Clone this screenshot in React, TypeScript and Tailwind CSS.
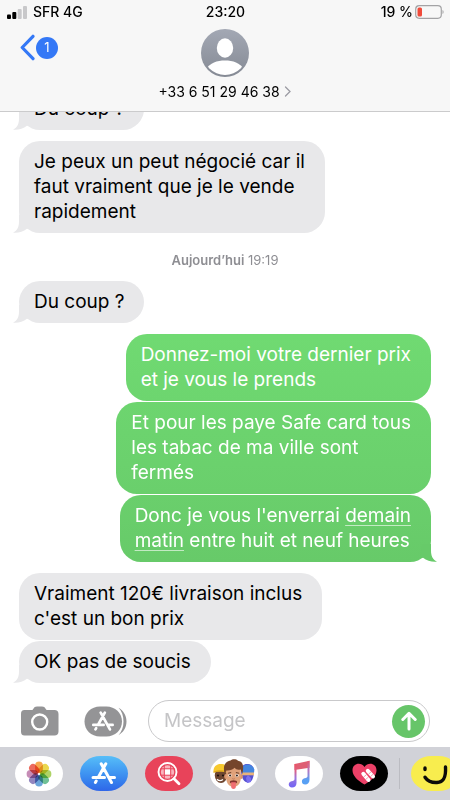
import type { ReactNode } from "react";

type Message = {
  text: ReactNode;
  mine?: boolean;
  tail?: boolean;
  shade?: string;
};

const earlier: Message[][] = [
  [{ text: "Du coup ?", tail: true }],
  [
    {
      text: "Je peux un peut négocié car il\nfaut vraiment que je le vende\nrapidement",
      tail: true,
    },
  ],
];

const today: Message[][] = [
  [{ text: "Du coup ?", tail: true }],
  [
    {
      text: "Donnez-moi votre dernier prix\net je vous le prends",
      mine: true,
      shade: "bg-linear-to-b from-[#70da72] to-[#6dd56f]",
    },
    {
      text: "Et pour les paye Safe card tous\nles tabac de ma ville sont\nfermés",
      mine: true,
      shade: "bg-linear-to-b from-[#6dd56f] to-[#6acf6c]",
    },
    {
      text: (
        <>
          Donc je vous l'enverrai <Underlined>demain</Underlined>
          {"\n"}
          <Underlined>matin</Underlined> entre huit et neuf heures
        </>
      ),
      mine: true,
      tail: true,
      shade: "bg-linear-to-b from-[#6acf6c] to-[#67ca69]",
    },
  ],
  [
    { text: "Vraiment 120€ livraison inclus\nc'est un bon prix" },
    { text: "OK pas de soucis", tail: true },
  ],
];

function Underlined({ children }: { children: ReactNode }) {
  return (
    <span className="underline decoration-white/60 decoration-1 underline-offset-3">
      {children}
    </span>
  );
}

function Bubble({ text, mine, tail, shade }: Message) {
  return (
    <div
      className={`relative rounded-[21px] pt-2 pb-[9px] pr-5 pl-[15px] text-[19px] leading-[25px] whitespace-pre-line ${
        mine ? `self-end text-white ${shade}` : "self-start bg-[#e8e8ea] text-black"
      }`}
    >
      {text}
      {tail && (
        <svg
          viewBox="0 0 20 18"
          className={`absolute bottom-0 h-[18px] w-5 ${
            mine ? "-right-1.5 -scale-x-100 text-[#67ca69]" : "-left-1.5 text-[#e8e8ea]"
          }`}
          fill="currentColor"
          aria-hidden="true"
        >
          <path d="M0 17.700C4.500 15.500 6 12 6 6V0h9l2 14-3-.3C10 17 5 18.200 0 17.700z" />
        </svg>
      )}
    </div>
  );
}

function Groups({ groups }: { groups: Message[][] }) {
  return (
    <>
      {groups.map((group, i) => (
        <div key={i} className="flex shrink-0 flex-col gap-px">
          {group.map((message, j) => (
            <Bubble key={j} {...message} />
          ))}
        </div>
      ))}
    </>
  );
}

function StatusBar() {
  return (
    <div className="grid grid-cols-3 items-center pr-1.5 pl-[7px] text-[14px] leading-6 font-medium">
      <div className="flex items-center gap-1.5">
        <svg width="20" height="13" viewBox="0 0 20 13" aria-hidden="true">
          <rect x="0" y="8.500" width="4" height="4.500" rx="1" />
          <rect x="5.300" y="6" width="4" height="7" rx="1" />
          <rect x="10.700" y="3" width="4" height="10" rx="1" fill="#c8c8ca" />
          <rect x="16" y="0" width="4" height="13" rx="1" fill="#c8c8ca" />
        </svg>
        <span>SFR 4G</span>
      </div>
      <span className="text-center">23:20</span>
      <div className="flex items-center justify-end gap-0.5">
        <span>19 %</span>
        <svg width="29" height="14" viewBox="0 0 29 14" aria-hidden="true">
          <rect x=".7" y=".7" width="25.600" height="12.600" rx="3.500" fill="none" stroke="#a3a3a5" strokeWidth="1.200" />
          <rect x="2.500" y="2.500" width="4.500" height="9" rx="1.500" fill="#f04a3a" />
          <path d="M27.500 5v4c1.500-.5 1.500-3.500 0-4z" fill="#a3a3a5" />
        </svg>
      </div>
    </div>
  );
}

function Header() {
  return (
    <header className="z-10 shrink-0 border-b border-[#cbcbcc] bg-[#f7f7f7]">
      <StatusBar />
      <div className="grid grid-cols-[1fr_auto_1fr] items-start pt-1 pb-[10px]">
        <button className="mt-1.5 ml-5 flex items-center gap-px justify-self-start" aria-label="Retour, 1 message non lu">
          <svg width="15" height="27" viewBox="0 0 15 27" fill="none" stroke="#3478f6" strokeWidth="3.200" strokeLinecap="round" strokeLinejoin="round">
            <path d="M13 2.300 2.200 13.500 13 24.700" />
          </svg>
          <span className="flex size-[22px] items-center justify-center rounded-full bg-[#3478f6] text-[13px] text-white">
            1
          </span>
        </button>
        <button className="flex flex-col items-center gap-1">
          <svg width="48" height="50" viewBox="0 0 48 50" aria-hidden="true">
            <defs>
              <linearGradient id="avatar" x1="0" y1="0" x2="0" y2="1">
                <stop offset="0" stopColor="#a3a8b4" />
                <stop offset="1" stopColor="#858a94" />
              </linearGradient>
              <clipPath id="avatarClip">
                <circle cx="24" cy="25" r="22" />
              </clipPath>
            </defs>
            <circle cx="24" cy="25" r="24" fill="url(#avatar)" />
            <ellipse cx="24" cy="20" rx="8.200" ry="9.700" fill="#fff" />
            <path clipPath="url(#avatarClip)" d="M5 41C9 35 16 32.500 24 32.500S39 35 43 41C37 46 31 48 24 48S11 46 5 41z" fill="#fff" />
          </svg>
          <span className="flex items-center gap-1 text-[14px] leading-[19px]">
            +33 6 51 29 46 38
            <svg width="8" height="11" viewBox="0 0 8 11" fill="none" stroke="#9b9ba3" strokeWidth="1.300" strokeLinecap="round">
              <path d="m1.500 1 4.500 4.500L1.500 10" />
            </svg>
          </span>
        </button>
      </div>
    </header>
  );
}

function AppStoreGlyph() {
  return (
    <g fill="none" stroke="#fff" strokeWidth="3" strokeLinecap="round">
      <path d="M14.800 1.800 7.500 15M10.200 1.800 20.500 20.500M2 15.500h11.500M19 15.500h4.500M5.200 19l-.8 1.400" />
    </g>
  );
}

function Composer() {
  return (
    <form className="flex shrink-0 items-center bg-white pt-[17px] pr-5 pb-[5px] pl-5" onSubmit={(e) => e.preventDefault()}>
      <button type="button" aria-label="Appareil photo">
        <svg width="39" height="30" viewBox="0 0 39 30">
          <path
            d="M4.500 4h7.200c.8 0 1.200-.4 1.700-1.200C14.300 1.200 15 .5 17 .5h5c2 0 2.700.7 3.600 2.300.5.8.9 1.200 1.700 1.200h7.200C37 4 38.500 5.500 38.500 8v17.500c0 2.500-1.500 4-4 4h-30c-2.500 0-3.500-1.500-3.500-4V8c0-2.500 1-4 3.500-4z"
            fill="#949496"
          />
          <circle cx="19.700" cy="16" r="7.500" fill="none" stroke="#fff" strokeWidth="2.400" />
        </svg>
      </button>
      <button type="button" className="ml-[25px]" aria-label="Apps">
        <svg width="43" height="31" viewBox="0 0 43 31">
          <path d="M16 .5h6.500C31 .5 38 7 38 15.500s-7 15-15.500 15H16C7 30.500.5 24 .5 15.500S7 .5 16 .5z" fill="#949496" />
          <path d="M34.500 1.800C39 4.500 42.500 9 42.500 15.500S39 26.500 34.500 29.200c3.300-3.500 5-8.200 5-13.700s-1.700-10.200-5-13.700z" fill="#949496" />
          <g transform="translate(7.500 5) scale(.9)">
            <AppStoreGlyph />
          </g>
        </svg>
      </button>
      <div className="ml-[21px] flex h-[42px] min-w-0 flex-1 items-center rounded-full border border-[#c9c9cb] pr-1 pl-[15px]">
        <input
          aria-label="Message"
          placeholder="Message"
          className="min-w-0 flex-1 bg-transparent text-[19px] outline-none placeholder:text-[#c5c5c7]"
        />
        <button className="flex size-[33px] shrink-0 items-center justify-center rounded-full bg-[#67c569]" aria-label="Envoyer">
          <svg width="16" height="20" viewBox="0 0 16 20" fill="none" stroke="#fff" strokeWidth="3" strokeLinecap="round" strokeLinejoin="round">
            <path d="M8 18V2.500M1.800 8.500 8 2.300l6.200 6.200" />
          </svg>
        </button>
      </div>
    </form>
  );
}

const petals = ["#f5a03c", "#e8d33a", "#a5cf55", "#5fb98a", "#5c9bd6", "#8679b8", "#c07fae", "#ea5a4b"];

function PhotosIcon() {
  return (
    <svg width="26" height="26" viewBox="-13 -13 26 26">
      {petals.map((color, i) => (
        <rect
          key={color}
          x="-3.900"
          y="-12.400"
          width="7.800"
          height="11.400"
          rx="3.900"
          fill={color}
          className="mix-blend-multiply"
          opacity=".9"
          transform={`rotate(${i * 45})`}
        />
      ))}
    </svg>
  );
}

function SearchIcon() {
  return (
    <svg width="24" height="24" viewBox="0 0 24 24" fill="none" stroke="#fff">
      <circle cx="10.500" cy="10" r="9" strokeWidth="1.900" />
      <circle cx="10.500" cy="10" r="6.700" fill="#f9b4bd" stroke="none" />
      <rect x="7.500" y="7" width="6" height="6" fill="#fff" stroke="none" />
      <path d="M7.300 3v14M13.700 3v14M3.500 6.800h14M3.500 13.200h14" stroke="#e8435a" strokeWidth="1" />
      <path d="m17 16.700 5 5" strokeWidth="2.800" strokeLinecap="round" />
    </svg>
  );
}

function MemojiIcon() {
  return (
    <svg width="44" height="32" viewBox="0 0 44 32">
      <ellipse cx="9" cy="17.500" rx="6.200" ry="7.500" fill="#6e4630" />
      <path d="M1.500 14.500C1 8 5 5.500 10 6s6.500 4 6 9c-5-2-10-2-14.500-.5z" fill="#f7c92f" />
      <path d="M1.500 14.200c5-1.800 10-1.800 14.500 0" stroke="#dda51c" strokeWidth="1.200" fill="none" />
      <circle cx="6" cy="17.500" r="1.100" fill="#20130d" />
      <circle cx="11" cy="17.500" r="1.100" fill="#20130d" />
      <path d="M5 21.200c2 2 4 1.800 6 .3" stroke="#fff" strokeWidth="1.300" fill="none" />
      <path d="M29 13C29 8 32 5.500 36 6s6.500 3.500 6 8.500-2 10-6 10-6.500-4.500-7-11.500z" fill="#5550cf" />
      <path d="M29.500 11c2.500-6 10.500-6 12.800.5L42 15H30z" fill="#4486df" />
      <path d="M30 14.500h12v2.800H30z" fill="#e7b27b" />
      <path d="m34 20 2-3 3 3v4l-4 1z" fill="#7a6fee" />
      <ellipse cx="13.900" cy="18.500" rx="1.700" ry="2.600" fill="#d9956c" />
      <ellipse cx="29.100" cy="18.500" rx="1.700" ry="2.600" fill="#d9956c" />
      <path d="M14.200 14c0-6 3.500-8 7.300-8s7.300 2 7.300 8v5.500c0 6-3.300 9.500-7.300 9.500s-7.300-3.500-7.300-9.500z" fill="#e0a27a" />
      <path d="M12.700 16C10.500 8 13 3.500 18.500 2.500c2-1.700 5.500-1.700 7.500.2C31.500 3.500 32 9 30.300 16l-1.800-4.500c-3 .5-4.500 0-6-1.700-2 2-4.500 3-8.100 2.700z" fill="#75452b" />
      <path d="m15.900 15.300 3.300-.8M23.900 14.500l3.300.8" stroke="#68402c" strokeWidth="1" />
      <ellipse cx="18" cy="17.500" rx="1.600" ry="1.400" fill="#fff" />
      <ellipse cx="25" cy="17.500" rx="1.600" ry="1.400" fill="#fff" />
      <circle cx="18.100" cy="17.500" r="1.100" fill="#3b251c" />
      <circle cx="24.900" cy="17.500" r="1.100" fill="#3b251c" />
      <path d="M20.300 20.500c.8.800 1.700.8 2.500 0" stroke="#bc7557" strokeWidth="1" fill="none" />
      <ellipse cx="21.500" cy="24" rx="3.600" ry="1.700" fill="#84322d" />
      <path d="M19.200 24.300h4.600v4.500c0 3-4.600 3-4.600 0z" fill="#f06e73" />
    </svg>
  );
}

function MusicIcon() {
  return (
    <svg width="23" height="28" viewBox="0 0 23 28">
      <defs>
        <linearGradient id="music" x1=".5" y1="0" x2=".5" y2="1">
          <stop offset="0" stopColor="#ed5361" />
          <stop offset=".3" stopColor="#dc6088" />
          <stop offset=".6" stopColor="#9876df" />
          <stop offset="1" stopColor="#7164f5" />
        </linearGradient>
        <linearGradient id="musicRight" x1="0" y1="0" x2="0" y2="1">
          <stop offset="0" stopColor="#e45a70" />
          <stop offset=".45" stopColor="#ae7ac7" />
          <stop offset=".8" stopColor="#58a0f4" />
        </linearGradient>
      </defs>
      <path d="M6.500 4 21.500.8v7L6.500 10z" fill="#df5e73" />
      <path d="M6.500 4h2v19c0 3-2 4.500-4.500 4.500-4 0-4.500-5.300-.5-6.200 2-.4 3-.7 3-2.300z" fill="url(#music)" />
      <path d="M19.500 1.200l2-.4v19c0 3-1.800 4.700-4.300 4.700-4 0-4.500-5.300-.7-6.200 2-.4 3-.7 3-2.300z" fill="url(#musicRight)" />
    </svg>
  );
}

function HeartIcon() {
  return (
    <svg width="25" height="22" viewBox="0 0 25 22">
      <path d="M12.500 21.500C5.500 17.500.5 12.500.5 7.200c0-7 8.500-8.700 12-3.200 3.500-5.500 12-3.800 12 3.200 0 5.300-5 10.300-12 14.300z" fill="#ec4067" />
      <g stroke="#fff" strokeWidth="4" strokeLinecap="round">
        <path d="m11.300 10.800 5.200 6.200M15.800 7.800l5.200 5.700" />
      </g>
      <g stroke="#ec4067" strokeWidth=".5">
        <path d="m11.500 14.200 3-2.600M13.500 16.600l3-2.600M16.500 11.200l2.800-2.600M18.500 13.600l2.800-2.600" />
      </g>
    </svg>
  );
}

function SmileIcon() {
  return (
    <svg width="28" height="24" viewBox="0 0 28 24" fill="none" stroke="#0b0b08" strokeWidth="3.400" strokeLinecap="round">
      <path d="M4 6v1.500M24.500 5C25 14 23.500 20 16 20.500c-6 .3-9.500-1.500-12-5.300" />
    </svg>
  );
}

const apps = [
  { name: "Photos", bg: "bg-white", icon: <PhotosIcon /> },
  {
    name: "App Store",
    bg: "bg-linear-to-b from-[#57bef8] to-[#2f66e8]",
    icon: (
      <svg width="26" height="23" viewBox="0 0 26 23">
        <AppStoreGlyph />
      </svg>
    ),
  },
  { name: "Images", bg: "bg-[#e8435a]", icon: <SearchIcon /> },
  { name: "Memoji", bg: "bg-white", icon: <MemojiIcon /> },
  { name: "Musique", bg: "bg-white", icon: <MusicIcon /> },
  { name: "Digital Touch", bg: "bg-black", icon: <HeartIcon /> },
];

function AppTray() {
  return (
    <nav className="flex shrink-0 items-center gap-[17px] overflow-hidden bg-[#d1d2d8] py-[9px] pl-[15px]">
      {apps.map((app) => (
        <button
          key={app.name}
          aria-label={app.name}
          className={`flex h-[35px] w-12 shrink-0 items-center justify-center rounded-[21px/18px] ${app.bg}`}
        >
          {app.icon}
        </button>
      ))}
      <div className="-ml-1.5 flex shrink-0 items-center gap-[11px]">
        <span className="h-[31px] w-px bg-[#bbbcc2]" />
        <button aria-label="Autocollants" className="flex h-[35px] w-12 items-center justify-center rounded-[21px/18px] bg-[#f8ed4e]">
          <SmileIcon />
        </button>
      </div>
    </nav>
  );
}

export default function App() {
  return (
    <div className="flex h-screen flex-col overflow-hidden bg-white font-['Inter','Liberation_Sans',sans-serif] text-black">
      <Header />
      <main className="flex min-h-0 flex-1 flex-col justify-end gap-[11px] overflow-hidden px-[19px]">
        <Groups groups={earlier} />
        <p className="shrink-0 pt-2 pb-0.5 text-center text-[13px] leading-4 text-[#8e8e93]">
          <span className="font-semibold">Aujourd’hui</span> 19:19
        </p>
        <Groups groups={today} />
      </main>
      <Composer />
      <AppTray />
    </div>
  );
}
